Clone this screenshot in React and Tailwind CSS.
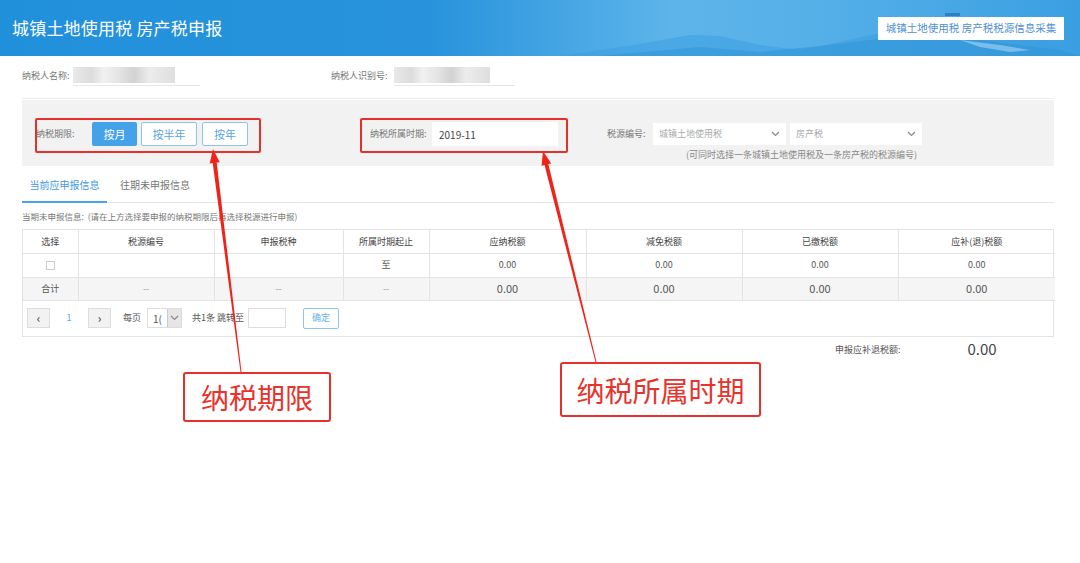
import React from "react";

const cols = [55, 136, 129, 86, 157, 156, 156, 157];
const heads = ["选择", "税源编号", "申报税种", "所属时期起止", "应纳税额", "减免税额", "已缴税额", "应补(退)税额"];

const Blur = ({ w, line }) => (
  <div className="relative h-[20px]" style={{ width: line }}>
    <div
      className="h-[16px] mt-[1px]"
      style={{
        width: w,
        background:
          "linear-gradient(90deg,#e9e9e9 0%,#dcdcdc 18%,#f1f1f1 30%,#e4e4e4 45%,#d2d2d2 60%,#ececec 75%,#dedede 100%)",
      }}
    />
    <div className="absolute left-0 right-0 bottom-0 h-px bg-[#e6e6e6]" />
  </div>
);

const Chevron = ({ className = "" }) => (
  <svg width="9" height="6" viewBox="0 0 9 6" className={className}>
    <path d="M1 1l3.5 3.5L8 1" fill="none" stroke="#888" strokeWidth="1.2" />
  </svg>
);

const Header = () => (
  <div
    className="relative h-[56px] flex items-center justify-between pl-[12px] pr-[16px] overflow-hidden"
    style={{
      background:
        "linear-gradient(90deg,#2190db 0%,#2893dc 40%,#5db4ea 62%,#56b0e8 75%,#3a9fe2 100%)",
    }}
  >
    <svg className="absolute inset-0 pointer-events-none" width="1080" height="56" viewBox="0 0 1080 56">
      <path d="M560 56 L640 44 L690 35 L720 36 L760 45 L800 50 L830 44 L880 33 L930 24 L980 30 L1040 38 L1080 52 L1080 56 Z" fill="#3c9fe0" opacity="0.55" />
      <path d="M600 56 L700 47 L760 52 L820 46 L870 40 L920 34 L960 37 L1010 44 L1060 50 L1080 56 Z" fill="#2d93d8" opacity="0.5" />
      <path d="M960 40 L1000 45 L1030 50 L1010 52 L980 47 Z" fill="#a9d6f3" opacity="0.6" />
      <rect x="945" y="13" width="15" height="3" fill="#2f7fc4" />
    </svg>
    <h1 className="relative text-white text-[17px] tracking-[0.2px]">城镇土地使用税 房产税申报</h1>
    <div className="relative bg-white h-[23px] w-[186px] flex items-center justify-center text-[10.5px] text-[#4f8fd6]">
      城镇土地使用税 房产税税源信息采集
    </div>
  </div>
);

export default function App() {
  return (
    <div className="relative w-[1080px] h-[563px] overflow-hidden bg-white text-[#555] font-['Noto_Sans_CJK_SC','Liberation_Sans',sans-serif]">
      <Header />

      <div className="pl-[22px] pr-[26px]">
        {/* taxpayer info */}
        <div className="h-[43px] pt-[10px] border-b border-[#ececec] flex items-start text-[9px] text-[#777]">
          <div className="flex items-center w-[309px]">
            <span className="w-[51px] leading-[20px]">纳税人名称:</span>
            <Blur w={102} line={127} />
          </div>
          <div className="flex items-center">
            <span className="w-[63px] leading-[20px]">纳税人识别号:</span>
            <Blur w={96} line={121} />
          </div>
        </div>

        {/* filter panel */}
        <div className="mt-px bg-[#f2f2f2] h-[66px] pl-[14px] pt-[22px]">
          <div className="flex items-center h-[24px] text-[9px] text-[#777]">
            <div className="flex items-center w-[334px]">
              <span className="w-[56px]">纳税期限:</span>
              <button className="w-[45px] h-[24px] bg-[#45a2e9] text-white text-[11px] rounded-[2px]">按月</button>
              <button className="ml-[4px] w-[56px] h-[24px] bg-white border border-[#8cc4ee] text-[#5aa6e4] text-[11px] rounded-[2px]">按半年</button>
              <button className="ml-[5px] w-[46px] h-[24px] bg-white border border-[#8cc4ee] text-[#5aa6e4] text-[11px] rounded-[2px]">按年</button>
            </div>
            <div className="flex items-center w-[237px]">
              <span className="w-[62px]">纳税所属时期:</span>
              <div className="w-[126px] h-[24px] bg-white flex items-center pl-[7px] text-[10px] text-[#444]">2019-11</div>
            </div>
            <div className="flex items-center">
              <span className="w-[46px]">税源编号:</span>
              <div className="w-[133px] h-[22px] bg-white flex items-center justify-between pl-[6px] pr-[6px] text-[#aaa]">
                <span>城镇土地使用税</span>
                <Chevron />
              </div>
              <div className="ml-[4px] w-[132px] h-[22px] bg-white flex items-center justify-between pl-[6px] pr-[6px] text-[#aaa]">
                <span>房产税</span>
                <Chevron />
              </div>
            </div>
          </div>
          <div className="ml-[650px] mt-[3px] leading-[12px] text-[9px] text-[#888]">
            (可同时选择一条城镇土地使用税及一条房产税的税源编号)
          </div>
        </div>

        {/* tabs */}
        <div className="h-[37px] border-b border-[#e6e6e6] flex items-end text-[10px]">
          <div className="w-[85px] h-full flex items-center justify-center border-b-2 border-[#4aa3e6] text-[#3f98e0] -mb-px">
            当前应申报信息
          </div>
          <div className="ml-[13px] h-full flex items-center text-[#777]">往期未申报信息</div>
        </div>

        <div className="h-[26px] flex items-center text-[8.5px] text-[#777]">
          当期未申报信息:&nbsp;&nbsp;(请在上方选择要申报的纳税期限后再选择税源进行申报)
        </div>

        {/* table */}
        <div className="border border-[#e3e3e3] w-[1032px]">
          <table className="border-collapse table-fixed w-full text-[9px] text-[#555]">
            <colgroup>
              {cols.map((w, i) => (
                <col key={i} style={{ width: w }} />
              ))}
            </colgroup>
            <thead>
              <tr className="h-[23px]">
                {heads.map((h, i) => (
                  <th key={i} className="font-normal text-[#444] border-r border-b border-[#e3e3e3] last:border-r-0">
                    {h}
                  </th>
                ))}
              </tr>
            </thead>
            <tbody>
              <tr className="h-[24px] text-center">
                <td className="border-r border-b border-[#e3e3e3]">
                  <span className="inline-block w-[9px] h-[9px] border border-[#ccc] bg-white align-middle" />
                </td>
                <td className="border-r border-b border-[#e3e3e3]" />
                <td className="border-r border-b border-[#e3e3e3]" />
                <td className="border-r border-b border-[#e3e3e3]">至</td>
                <td className="border-r border-b border-[#e3e3e3]">0.00</td>
                <td className="border-r border-b border-[#e3e3e3]">0.00</td>
                <td className="border-r border-b border-[#e3e3e3]">0.00</td>
                <td className="border-b border-[#e3e3e3]">0.00</td>
              </tr>
              <tr className="h-[23px] text-center bg-[#f5f5f5]">
                <td className="border-r border-b border-[#e3e3e3]">合计</td>
                <td className="border-r border-b border-[#e3e3e3] text-[#999]">--</td>
                <td className="border-r border-b border-[#e3e3e3] text-[#999]">--</td>
                <td className="border-r border-b border-[#e3e3e3] text-[#999]">--</td>
                <td className="border-r border-b border-[#e3e3e3] text-[11px]">0.00</td>
                <td className="border-r border-b border-[#e3e3e3] text-[11px]">0.00</td>
                <td className="border-r border-b border-[#e3e3e3] text-[11px]">0.00</td>
                <td className="border-b border-[#e3e3e3] text-[11px]">0.00</td>
              </tr>
            </tbody>
          </table>

          {/* pagination */}
          <div className="h-[35px] flex items-center pl-[4px] text-[9px] text-[#555]">
            <div className="w-[23px] h-[20px] bg-[#f2f2f2] border border-[#ddd] flex items-center justify-center text-[12px] text-[#333] leading-none">‹</div>
            <span className="w-[38px] text-center text-[#5aa6e4]">1</span>
            <div className="w-[23px] h-[20px] bg-[#f2f2f2] border border-[#ddd] flex items-center justify-center text-[12px] text-[#333] leading-none">›</div>
            <span className="ml-[12px]">每页</span>
            <div className="ml-[6px] w-[35px] h-[20px] border border-[#ddd] bg-white flex items-center">
              <span className="pl-[5px] w-[19px] overflow-hidden text-[10px]">1(</span>
              <div className="w-[14px] h-full bg-[#e6e6e6] border-l border-[#ccc] flex items-center justify-center">
                <Chevron />
              </div>
            </div>
            <span className="ml-[10px]">共1条 跳转至</span>
            <div className="ml-[4px] w-[38px] h-[20px] bg-white border border-[#ddd]" />
            <button className="ml-[17px] w-[36px] h-[21px] bg-white border border-[#8cc4ee] text-[#6ab0e8] rounded-[2px] text-[9px]">确定</button>
          </div>
        </div>

        {/* summary */}
        <div className="flex items-center h-[26px]">
          <span className="ml-[813px] text-[9px] text-[#555]">申报应补退税额:</span>
          <span className="ml-[67px] text-[15px] text-[#444]">0.00</span>
        </div>
      </div>

      {/* annotations */}
      <div className="absolute left-[35px] top-[118px] w-[226px] h-[35px] border-2 border-[#e8302a] rounded-[2px] pointer-events-none" />
      <div className="absolute left-[360px] top-[118px] w-[208px] h-[35px] border-2 border-[#e8302a] rounded-[2px] pointer-events-none" />

      <svg className="absolute inset-0 pointer-events-none" width="1080" height="563" viewBox="0 0 1080 563">
        <polygon points="213,149 219.7,162.3 216.7,162.6 241.5,372 240.5,372 212.7,163.1 209.7,163.5" fill="#f0231b" />
        <polygon points="543,151 551.2,163.4 548.3,164.1 596.5,362 595.5,362 544.5,165.1 541.6,165.8" fill="#f0231b" />
      </svg>

      <div className="absolute left-[183px] top-[372px] w-[148px] h-[50px] border-2 border-[#e8302a] rounded-[3px] bg-white flex items-center justify-center text-[28px] text-[#e8322b] leading-none">
        纳税期限
      </div>
      <div className="absolute left-[560px] top-[362px] w-[201px] h-[55px] border-2 border-[#e8302a] rounded-[3px] bg-white flex items-center justify-center text-[28px] text-[#e8322b] leading-none">
        纳税所属时期
      </div>
    </div>
  );
}
